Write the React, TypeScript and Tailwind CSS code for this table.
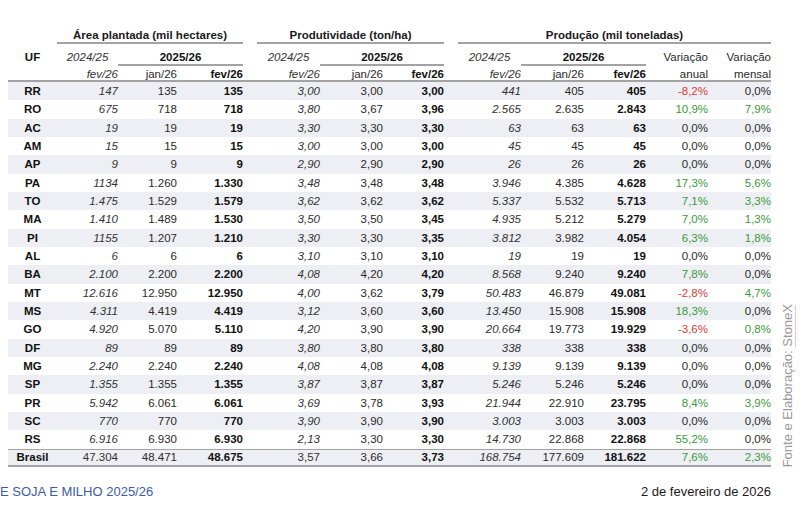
const rows = [
  ["RR", "147", "135", "135", "3,00", "3,00", "3,00", "441", "405", "405", "-8,2%", "0,0%"],
  ["RO", "675", "718", "718", "3,80", "3,67", "3,96", "2.565", "2.635", "2.843", "10,9%", "7,9%"],
  ["AC", "19", "19", "19", "3,30", "3,30", "3,30", "63", "63", "63", "0,0%", "0,0%"],
  ["AM", "15", "15", "15", "3,00", "3,00", "3,00", "45", "45", "45", "0,0%", "0,0%"],
  ["AP", "9", "9", "9", "2,90", "2,90", "2,90", "26", "26", "26", "0,0%", "0,0%"],
  ["PA", "1134", "1.260", "1.330", "3,48", "3,48", "3,48", "3.946", "4.385", "4.628", "17,3%", "5,6%"],
  ["TO", "1.475", "1.529", "1.579", "3,62", "3,62", "3,62", "5.337", "5.532", "5.713", "7,1%", "3,3%"],
  ["MA", "1.410", "1.489", "1.530", "3,50", "3,50", "3,45", "4.935", "5.212", "5.279", "7,0%", "1,3%"],
  ["PI", "1155", "1.207", "1.210", "3,30", "3,30", "3,35", "3.812", "3.982", "4.054", "6,3%", "1,8%"],
  ["AL", "6", "6", "6", "3,10", "3,10", "3,10", "19", "19", "19", "0,0%", "0,0%"],
  ["BA", "2.100", "2.200", "2.200", "4,08", "4,20", "4,20", "8.568", "9.240", "9.240", "7,8%", "0,0%"],
  ["MT", "12.616", "12.950", "12.950", "4,00", "3,62", "3,79", "50.483", "46.879", "49.081", "-2,8%", "4,7%"],
  ["MS", "4.311", "4.419", "4.419", "3,12", "3,60", "3,60", "13.450", "15.908", "15.908", "18,3%", "0,0%"],
  ["GO", "4.920", "5.070", "5.110", "4,20", "3,90", "3,90", "20.664", "19.773", "19.929", "-3,6%", "0,8%"],
  ["DF", "89", "89", "89", "3,80", "3,80", "3,80", "338", "338", "338", "0,0%", "0,0%"],
  ["MG", "2.240", "2.240", "2.240", "4,08", "4,08", "4,08", "9.139", "9.139", "9.139", "0,0%", "0,0%"],
  ["SP", "1.355", "1.355", "1.355", "3,87", "3,87", "3,87", "5.246", "5.246", "5.246", "0,0%", "0,0%"],
  ["PR", "5.942", "6.061", "6.061", "3,69", "3,78", "3,93", "21.944", "22.910", "23.795", "8,4%", "3,9%"],
  ["SC", "770", "770", "770", "3,90", "3,90", "3,90", "3.003", "3.003", "3.003", "0,0%", "0,0%"],
  ["RS", "6.916", "6.930", "6.930", "2,13", "3,30", "3,30", "14.730", "22.868", "22.868", "55,2%", "0,0%"],
];

const total = ["Brasil", "47.304", "48.471", "48.675", "3,57", "3,66", "3,73", "168.754", "177.609", "181.622", "7,6%", "2,3%"];

// 14 colunas: UF | área x3 | espaço | produtividade x3 | espaço | produção x3 + variações
const cols =
  "grid grid-cols-[49px_61px_59px_66px_14px_63px_63px_61px_14px_63px_63px_62px_62px_63px]";

function varColor(v: string) {
  if (v.startsWith("-")) return "text-[#d83b3b]";
  if (v === "0,0%") return "text-[#2a2a2a]";
  return "text-[#3a9a3a]";
}

function Cell({ v, i, isTotal }: { v: string; i: number; isTotal?: boolean }) {
  if (i === 0) return <div className="text-center font-bold text-[#111]">{v}</div>;
  if (i >= 10) return <div className={`text-right ${varColor(v)}`}>{v}</div>;
  const kind = (i - 1) % 3;
  if (kind === 2) return <div className="text-right font-bold text-[#111]">{v}</div>;
  if (kind === 1) return <div className="text-right text-[#2a2a2a]">{v}</div>;
  const italic = !isTotal || i === 7;
  return <div className={`text-right text-[#333] ${italic ? "italic" : ""}`}>{v}</div>;
}

function DataRow({ r, shaded, isTotal }: { r: string[]; shaded: boolean; isTotal?: boolean }) {
  const cells: React.ReactNode[] = [];
  r.forEach((v, i) => {
    if (i === 4 || i === 7) cells.push(<div key={"g" + i} />);
    cells.push(<Cell key={i} v={v} i={i} isTotal={isTotal} />);
  });
  return (
    <div
      className={`${cols} h-[18.33px] items-center ${shaded ? "bg-[#edeff4]" : ""} ${
        isTotal ? "border-t border-b-2 border-[#a3a3a3]" : ""
      }`}
    >
      {cells}
    </div>
  );
}

export default function App() {
  return (
    <div className="w-[800px] h-[512px] bg-white overflow-hidden font-['Liberation_Sans',Arial,sans-serif] text-[11.5px] leading-[14px]">
      <div className="flex pt-[25px] pl-[8px]">
        <div className="w-[763px]">
          {/* cabeçalho */}
          <div className={`${cols} h-[19px] font-bold text-[#1a1a1a]`}>
            <div />
            <div className="col-span-3 border-b-2 border-[#a3a3a3] pt-[3px] text-center">
              Área plantada (mil hectares)
            </div>
            <div />
            <div className="col-span-3 border-b-2 border-[#a3a3a3] pt-[3px] text-center">
              Produtividade (ton/ha)
            </div>
            <div />
            <div className="col-span-5 border-b-2 border-[#a3a3a3] pt-[3px] text-center">
              Produção (mil toneladas)
            </div>
          </div>

          <div className={`${cols} h-[19px] text-[#2a2a2a]`}>
            <div className="pt-[6px] text-center font-bold text-[#111]">UF</div>
            <div className="pt-[6px] text-center italic text-[#333]">2024/25</div>
            <div className="col-span-2 border-b-2 border-[#a3a3a3] pt-[6px] text-center font-bold text-[#111]">
              2025/26
            </div>
            <div />
            <div className="pt-[6px] text-center italic text-[#333]">2024/25</div>
            <div className="col-span-2 border-b-2 border-[#a3a3a3] pt-[6px] text-center font-bold text-[#111]">
              2025/26
            </div>
            <div />
            <div className="pt-[6px] text-center italic text-[#333]">2024/25</div>
            <div className="col-span-2 border-b-2 border-[#a3a3a3] pt-[6px] text-center font-bold text-[#111]">
              2025/26
            </div>
            <div className="pt-[6px] text-right">Variação</div>
            <div className="pt-[6px] text-right">Variação</div>
          </div>

          <div className={`${cols} h-[19px] border-b-2 border-[#a3a3a3] pt-[4px] text-[#2a2a2a]`}>
            <div />
            <div className="text-right italic text-[#333]">fev/26</div>
            <div className="text-right">jan/26</div>
            <div className="text-right font-bold text-[#111]">fev/26</div>
            <div />
            <div className="text-right italic text-[#333]">fev/26</div>
            <div className="text-right">jan/26</div>
            <div className="text-right font-bold text-[#111]">fev/26</div>
            <div />
            <div className="text-right italic text-[#333]">fev/26</div>
            <div className="text-right">jan/26</div>
            <div className="text-right font-bold text-[#111]">fev/26</div>
            <div className="text-right">anual</div>
            <div className="text-right">mensal</div>
          </div>

          {/* corpo */}
          {rows.map((r, idx) => (
            <DataRow key={r[0]} r={r} shaded={idx % 2 === 0} />
          ))}
          <DataRow r={total} shaded isTotal />
        </div>

        <div className="flex w-[29px] items-end justify-center pl-[4px]">
          <span className="[writing-mode:vertical-rl] rotate-180 text-[13px] leading-[16px] text-[#9a9a9a] whitespace-nowrap">
            Fonte e Elaboração:{" "}
            <span className="underline decoration-dotted decoration-[#e07070]">StoneX</span>
          </span>
        </div>
      </div>

      {/* rodapé */}
      <div className="mt-[15px] flex h-[20px] items-center justify-between pr-[29px] text-[13px]">
        <span className="text-[#3d5aa8]">E SOJA E MILHO 2025/26</span>
        <span className="text-[#1a1a1a]">2 de fevereiro de 2026</span>
      </div>
    </div>
  );
}
